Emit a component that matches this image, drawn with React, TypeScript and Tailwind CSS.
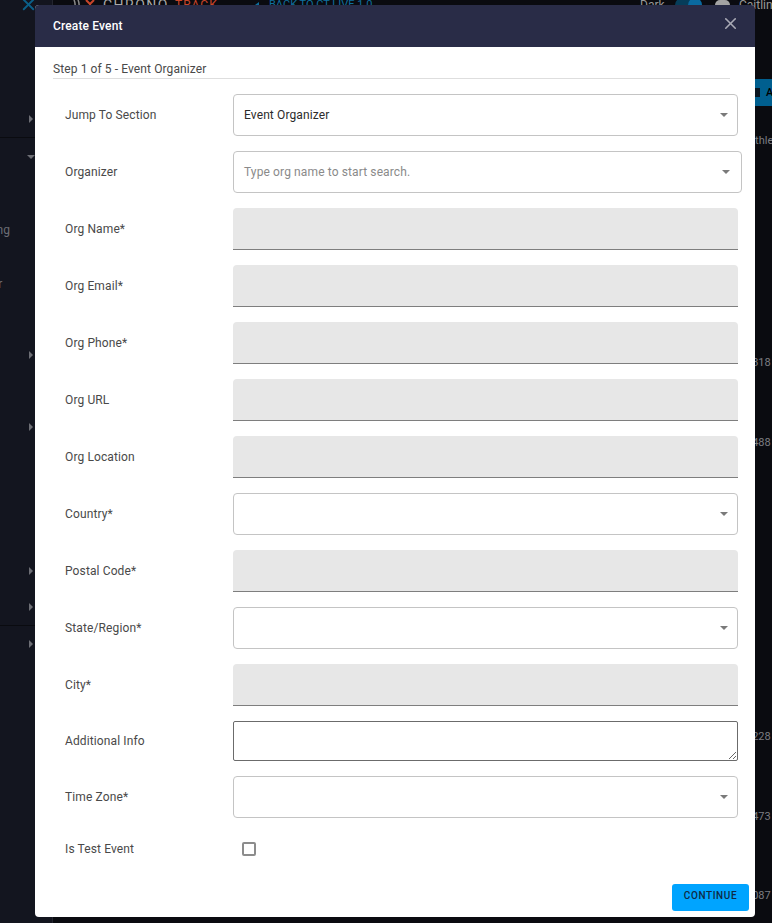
import React from "react";
import { X } from "lucide-react";

const Arrow = ({ down }: { down?: boolean }) => (
  <span
    className={
      down
        ? "w-0 h-0 border-x-[4px] border-x-transparent border-t-[4px] border-t-[#6d6e75]"
        : "w-0 h-0 border-y-[4px] border-y-transparent border-l-[4px] border-l-[#6d6e75]"
    }
  />
);

const Caret = () => (
  <span className="w-0 h-0 border-x-[4px] border-x-transparent border-t-[4px] border-t-[#7a7a7a]" />
);

const SideRow = ({ top, down }: { top: number; down?: boolean }) => (
  <div
    className={(down ? "pr-[17px] " : "pr-[19px] ") + "flex justify-end items-center h-[10px]"}
    style={{ marginTop: top }}
  >
    <Arrow down={down} />
  </div>
);

const TopBar = () => (
  <div className="h-[9px] shrink-0 overflow-hidden flex items-center pl-[20px] whitespace-nowrap text-[11px] leading-none">
    <svg width="26" height="9" viewBox="0 0 26 9" fill="none" className="shrink-0">
      <path d="M1 0c1.500 3 1.500 6 0 9M5 0c1.500 3 1.500 6 0 9" stroke="#8a8a8a" strokeWidth="1.500" />
      <path d="M13 0l4 4 4-4M17 4v5" stroke="#c8452a" strokeWidth="2" />
    </svg>
    <span className="ml-[4px] w-[72px] shrink-0 text-[#a9a9a9] text-[14px] tracking-[1.5px]">CHRONO</span>
    <span className="w-[80px] shrink-0 text-[#c8452a] text-[12px] tracking-[1px]">TRACK</span>
    <span className="w-0 h-0 shrink-0 border-y-[3px] border-y-transparent border-r-[4px] border-r-[#0f6f9e]" />
    <span className="ml-[10px] w-[371px] shrink-0 text-[#0f6f9e]">BACK TO CT LIVE 1.0</span>
    <span className="w-[35px] shrink-0 text-[#9a9a9a] text-[12px]">Dark</span>
    <span className="w-[27px] h-[14px] shrink-0 rounded-full bg-[#063d5a] flex justify-end">
      <span className="w-[14px] h-[14px] rounded-full bg-[#0a6aa0]" />
    </span>
    <span className="ml-[13px] w-[15px] h-[9px] shrink-0 rounded-t-[5px] bg-[#a3a3a3]" />
    <span className="ml-[9px] text-[#9a9a9a] text-[12px]">Caitlin</span>
  </div>
);

const Background = () => (
  <div className="flex w-[772px] h-[923px] overflow-hidden bg-[#0a0b10]">
    <div className="w-[53px] shrink-0 bg-[#13151f] border-r border-[#23252f] flex flex-col">
      <div className="h-0 pl-[19px] text-[#0b5f88]">
        <X size={19} strokeWidth={2.4} className="-mt-[5px]" />
      </div>
      <SideRow top={114} />
      <div className="h-px bg-[#0a0b10] mt-[13px]" />
      <SideRow top={14} down />
      <div className="mt-[60px] h-4 text-[12px] leading-4 text-[#6d6e75] whitespace-nowrap -ml-[27px]">Timing</div>
      <div className="mt-[38px] h-4 text-[12px] leading-4 text-[#6d6e75] whitespace-nowrap -ml-[27px]">Order</div>
      <SideRow top={58} />
      <SideRow top={62} />
      <SideRow top={134} />
      <SideRow top={26} />
      <div className="h-px bg-[#0a0b10] mt-[13px]" />
      <SideRow top={13} />
    </div>
    <div className="flex-1 min-w-0 flex flex-col">
      <TopBar />
      <div className="pl-[702px] text-[11px] leading-4 text-[#7c7d82] whitespace-nowrap flex flex-col">
        <div className="mt-[70px] h-[27px] w-[40px] bg-[#005f8f] text-black font-medium flex items-center">
          <span className="w-[5px] h-[9px] bg-[#0a1520]" />
          <span className="ml-[6px]">A</span>
        </div>
        <div className="mt-[27px] h-4 -ml-[7px]">Athlete</div>
        <div className="mt-[206px] h-4 -ml-[9px]">3318</div>
        <div className="mt-[64px] h-4 -ml-[9px]">5488</div>
        <div className="mt-[278px] h-4 -ml-[9px]">6228</div>
        <div className="mt-[64px] h-4 -ml-[9px]">1473</div>
        <div className="mt-[63px] h-4 -ml-[9px]">2087</div>
      </div>
    </div>
  </div>
);

const Label = ({ children }: { children: React.ReactNode }) => (
  <div className="w-[180px] shrink-0 pl-[12px] text-[12px] text-[#494949] tracking-[0.12px]">{children}</div>
);

const Filled = ({ label }: { label: string }) => (
  <div className="flex items-center">
    <Label>{label}</Label>
    <div className="w-[505px] h-[42px] bg-[#e7e7e7] rounded-t-[4px] border-b border-[#7e7e7e]" />
  </div>
);

const Select = ({
  label,
  value,
  placeholder,
  wide,
}: {
  label: string;
  value?: string;
  placeholder?: string;
  wide?: boolean;
}) => (
  <div className="flex items-center">
    <Label>{label}</Label>
    <div
      className={
        (wide ? "w-[509px] pr-[11px] " : "w-[505px] pr-[9px] ") +
        "h-[42px] bg-white rounded-[4px] border border-[#c4c4c4] pl-[10px] flex items-center justify-between text-[12px] tracking-[0.12px]"
      }
    >
      <span className={placeholder ? "text-[#8a8a8a]" : "text-[#2b2b2b]"}>{value || placeholder}</span>
      <Caret />
    </div>
  </div>
);

const Modal = () => (
  <div className="absolute left-[35px] top-[5px] w-[720px] h-[912px] bg-white rounded-[4px] overflow-hidden flex flex-col">
    <div className="h-[42px] shrink-0 bg-[#292c47] pl-[18px] pr-[15px] flex items-center justify-between">
      <span className="text-[12px] font-medium text-white tracking-[0.15px]">Create Event</span>
      <X size={19} className="text-[#a9aab5] -mt-[6px]" strokeWidth={2} />
    </div>
    <div className="mx-[18px] mt-[15px] mr-[25px] h-[17px] border-b border-[#dedede] text-[12px] leading-[15px] text-[#494949] tracking-[0.1px]">
      Step 1 of 5 - Event Organizer
    </div>
    <div className="pl-[18px] mt-[15px] flex flex-col gap-[15px]">
      <Select label="Jump To Section" value="Event Organizer" />
      <Select label="Organizer" placeholder="Type org name to start search." wide />
      <Filled label="Org Name*" />
      <Filled label="Org Email*" />
      <Filled label="Org Phone*" />
      <Filled label="Org URL" />
      <Filled label="Org Location" />
      <Select label="Country*" />
      <Filled label="Postal Code*" />
      <Select label="State/Region*" />
      <Filled label="City*" />
      <div className="flex items-center">
        <Label>Additional Info</Label>
        <textarea className="block w-[505px] h-[40px] bg-white rounded-[2px] border border-[#6b6b6b] outline-none" />
      </div>
      <Select label="Time Zone*" />
      <div className="flex items-center h-[18px] mt-[7px]">
        <Label>Is Test Event</Label>
        <div className="ml-[9px] w-[14px] h-[14px] border-2 border-[#8c8c8c] rounded-[2px]" />
      </div>
    </div>
    <div className="mt-auto mb-[6px] mr-[6px] flex justify-end">
      <button className="w-[77px] h-[27px] bg-[#00a4ff] rounded-[3px] text-[10px] leading-[24px] pb-[3px] font-medium text-[#0f2a44] tracking-[0.6px]">
        CONTINUE
      </button>
    </div>
  </div>
);

export default function App() {
  return (
    <div className="relative w-[772px] h-[923px] overflow-hidden font-['Roboto',sans-serif]">
      <Background />
      <Modal />
    </div>
  );
}
